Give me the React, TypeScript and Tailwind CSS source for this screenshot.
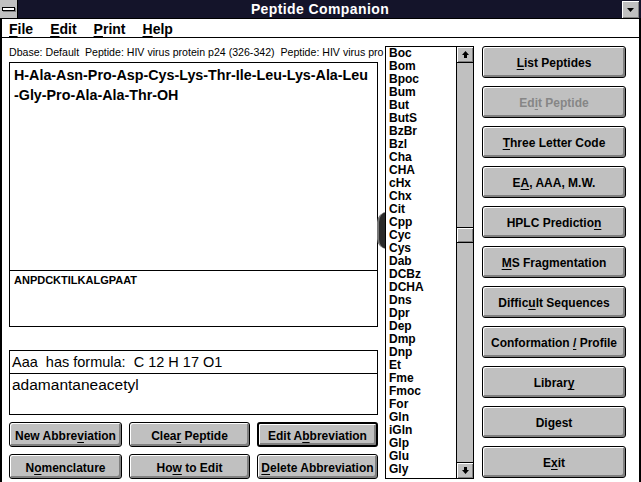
import React from "react";

const items = [
  "Boc","Bom","Bpoc","Bum","But","ButS","BzBr","Bzl","Cha","CHA","cHx","Chx","Cit","Cpp","Cyc","Cys",
  "Dab","DCBz","DCHA","Dns","Dpr","Dep","Dmp","Dnp","Et","Fme","Fmoc","For","Gln","iGln","Glp","Glu","Gly",
];

function Btn({ children, def, disabled, className }: { children: React.ReactNode; def?: boolean; disabled?: boolean; className?: string }) {
  return (
    <div
      className={`flex items-center justify-center pt-[2px] bg-[#c0c0c0] rounded-[3px] border-black shadow-[inset_1px_1px_0_#fff,inset_-2px_-2px_0_#808080] font-bold text-[12px] whitespace-nowrap ${def ? "border-2" : "border"} ${disabled ? "text-[#868686]" : "text-black"} ${className ?? ""}`}
    >
      <span>{children}</span>
    </div>
  );
}

function U({ children }: { children: React.ReactNode }) {
  return <span className="underline decoration-1 underline-offset-2">{children}</span>;
}

function ArrowBox({ down }: { down?: boolean }) {
  return (
    <div className={`h-[16px] w-full bg-[#c0c0c0] shadow-[inset_1px_1px_0_#fff,inset_-1px_-1px_0_#808080] flex items-center justify-center ${down ? "border-t border-black" : "border-b border-black"}`}>
      <svg width="7" height="7" viewBox="0 0 7 7">
        {down ? (
          <path d="M2 0h3v3h2L3.5 7 0 3h2z" fill="#000" />
        ) : (
          <path d="M3.5 0 7 4H5v3H2V4H0z" fill="#000" />
        )}
      </svg>
    </div>
  );
}

export default function App() {
  const right: React.ReactNode[] = [
    <><U>L</U>ist Peptides</>,
    <>Ed<U>i</U>t Peptide</>,
    <><U>T</U>hree Letter Code</>,
    <>E<U>A</U>, AAA, M.W.</>,
    <>HPLC Predictio<U>n</U></>,
    <><U>M</U>S Fragmentation</>,
    <>Diffic<U>u</U>lt Sequences</>,
    <>Conformation <U>/</U> Profile</>,
    <>Librar<U>y</U></>,
    <>Digest</>,
    <>E<U>x</U>it</>,
  ];
  return (
    <div className="w-[641px] h-[482px] flex flex-col bg-white overflow-hidden font-['Liberation_Sans',Arial,sans-serif] text-black">
      {/* title bar */}
      <div className="h-[19px] flex items-stretch bg-[#14142a] border-b border-black">
        <div className="w-[18px] h-[18px] bg-[#c0c0c0] border-r border-black flex items-center justify-center">
          <div className="w-[13px] h-[4px] bg-white border border-black shadow-[1px_1px_0_#808080]" />
        </div>
        <div className="flex-1 flex items-center justify-center text-white font-bold text-[14px] tracking-[0.4px] leading-none">
          Peptide Companion
        </div>
        <div className="w-[17px] h-[17px] mt-[1px] mr-[2px] bg-[#c0c0c0] shadow-[inset_1px_1px_0_#fff,inset_-1px_-1px_0_#808080] flex items-center justify-center">
          <svg width="7" height="4" viewBox="0 0 7 4"><path d="M0 0h7L3.5 4z" fill="#000" /></svg>
        </div>
      </div>
      {/* body */}
      <div className="flex-1 flex flex-col border-x-2 border-black">
        {/* menu */}
        <div className="h-[19px] flex items-center pl-[7px] pt-[1px] gap-[17px] border-b border-black font-bold text-[14px] leading-none">
          <span><U>F</U>ile</span>
          <span><U>E</U>dit</span>
          <span><U>P</U>rint</span>
          <span><U>H</U>elp</span>
        </div>
        {/* content */}
        <div className="relative flex-1 flex pt-[8px] pl-[7px]">
          {/* left column */}
          <div className="w-[369px] flex flex-col">
            <div className="w-[376px] h-[16px] text-[10.6px] leading-[13px] whitespace-nowrap overflow-hidden">
              Dbase: Default&nbsp; Peptide: HIV virus protein p24 (326-342)&nbsp; Peptide: HIV virus pro
            </div>
            <div className="relative z-0 h-[265px] border border-black flex flex-col bg-white">
              <div className="h-[208px] border-b border-black pt-[2px] pl-[4px] font-bold text-[14.3px] leading-[20px] whitespace-nowrap">
                <div>H-Ala-Asn-Pro-Asp-Cys-Lys-Thr-Ile-Leu-Lys-Ala-Leu</div>
                <div>-Gly-Pro-Ala-Ala-Thr-OH</div>
              </div>
              <div className="flex-1 pt-[3px] pl-[4px] font-bold text-[11px] leading-[13px]">ANPDCKTILKALGPAAT</div>
            </div>
            <div className="mt-[23px] h-[65px] border border-black flex flex-col">
              <div className="h-[23px] border-b border-black pl-[2px] flex items-center text-[14.5px] leading-none whitespace-pre">
                Aaa  has formula:  C 12 H 17 O1
              </div>
              <div className="flex-1 pl-[2px] pt-[2px] text-[15.5px] leading-[18px]">adamantaneacetyl</div>
            </div>
            <div className="mt-[7px] flex gap-[7px]">
              <Btn className="w-[113px] h-[25px]">New Abbre<U>v</U>iation</Btn>
              <Btn className="w-[121px] h-[25px]">Clea<U>r</U> Peptide</Btn>
              <Btn def className="w-[121px] h-[25px]">Edit A<U>b</U>breviation</Btn>
            </div>
            <div className="mt-[7px] flex gap-[7px]">
              <Btn className="w-[113px] h-[25px]">N<U>o</U>menclature</Btn>
              <Btn className="w-[121px] h-[25px]">Ho<U>w</U> to Edit</Btn>
              <Btn className="w-[121px] h-[25px]"><U>D</U>elete Abbreviation</Btn>
            </div>
          </div>
          {/* crescent artifact */}
          <div className="absolute left-[375px] top-[174px] w-[10px] h-[37px] rounded-l-full bg-[#2a2a2a] border-l-2 border-[#777]" />
          {/* listbox */}
          <div className="relative z-10 ml-[7px] w-[89px] h-[433px] border border-black bg-white flex">
            <div className="flex-1 pl-[3px] font-bold text-[12px] leading-[13px] overflow-hidden">
              {items.map((it) => (
                <div key={it} className="h-[13px]">{it}</div>
              ))}
            </div>
            <div className="w-[17px] border-l border-black bg-[#c0c0c0] flex flex-col">
              <ArrowBox />
              <div className="h-[164px]" />
              <div className="h-[16px] bg-[#c0c0c0] border-y border-black shadow-[inset_1px_1px_0_#fff,inset_-1px_-1px_0_#808080]" />
              <div className="flex-1" />
              <ArrowBox down />
            </div>
          </div>
          {/* right buttons */}
          <div className="ml-[8px] w-[144px] flex flex-col gap-[8px]">
            {right.map((r, i) => (
              <Btn key={i} disabled={i === 1} className="h-[32px]">{r}</Btn>
            ))}
          </div>
        </div>
      </div>
    </div>
  );
}
